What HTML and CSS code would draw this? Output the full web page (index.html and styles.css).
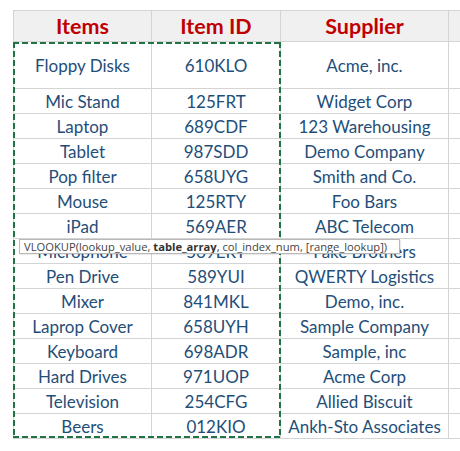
FILE: index.html
```html
<!DOCTYPE html>
<html>
<head>
<meta charset="utf-8">
<link rel="stylesheet" href="styles.css">
</head>
<body>
<div class="sheet">
  <div class="grid">
    <div class="cell head">Items</div>
    <div class="cell head">Item ID</div>
    <div class="cell head">Supplier</div>
    <div class="cell head"></div>

    <div class="cell">Floppy Disks</div><div class="cell">610KLO</div><div class="cell">Acme, inc.</div><div class="cell"></div>
    <div class="cell">Mic Stand</div><div class="cell">125FRT</div><div class="cell">Widget Corp</div><div class="cell"></div>
    <div class="cell">Laptop</div><div class="cell">689CDF</div><div class="cell">123 Warehousing</div><div class="cell"></div>
    <div class="cell">Tablet</div><div class="cell">987SDD</div><div class="cell">Demo Company</div><div class="cell"></div>
    <div class="cell">Pop filter</div><div class="cell">658UYG</div><div class="cell">Smith and Co.</div><div class="cell"></div>
    <div class="cell">Mouse</div><div class="cell">125RTY</div><div class="cell">Foo Bars</div><div class="cell"></div>
    <div class="cell">iPad</div><div class="cell">569AER</div><div class="cell">ABC Telecom</div><div class="cell"></div>
    <div class="cell">Microphone</div><div class="cell">569ERT</div><div class="cell">Fake Brothers</div><div class="cell"></div>
    <div class="cell">Pen Drive</div><div class="cell">589YUI</div><div class="cell">QWERTY Logistics</div><div class="cell"></div>
    <div class="cell">Mixer</div><div class="cell">841MKL</div><div class="cell">Demo, inc.</div><div class="cell"></div>
    <div class="cell">Laprop Cover</div><div class="cell">658UYH</div><div class="cell">Sample Company</div><div class="cell"></div>
    <div class="cell">Keyboard</div><div class="cell">698ADR</div><div class="cell">Sample, inc</div><div class="cell"></div>
    <div class="cell">Hard Drives</div><div class="cell">971UOP</div><div class="cell">Acme Corp</div><div class="cell"></div>
    <div class="cell">Television</div><div class="cell">254CFG</div><div class="cell">Allied Biscuit</div><div class="cell"></div>
    <div class="cell">Beers</div><div class="cell">012KIO</div><div class="cell">Ankh-Sto Associates</div><div class="cell"></div>
  </div>
  <div class="marquee"></div>
  <div class="tooltip">VLOOKUP(lookup_value, <b>table_array</b>, col_index_num, [range_lookup])</div>
</div>
</body>
</html>
```

FILE: styles.css
```css
html, body {
  margin: 0;
  padding: 0;
  background: #ffffff;
  overflow: hidden;
}
body {
  width: 460px;
  height: 451px;
}
.sheet {
  position: relative;
  padding: 10px 0 0 13px;
}
.grid {
  display: grid;
  grid-template-columns: 138px 129px 168px 1fr;
  grid-template-rows: 31px 47px;
  grid-auto-rows: 25px;
  border-top: 1px solid #d4d4d4;
  border-left: 1px solid #d4d4d4;
}
.cell {
  box-sizing: border-box;
  border-right: 1px solid #d4d4d4;
  border-bottom: 1px solid #d4d4d4;
  display: flex;
  align-items: center;
  justify-content: center;
  font-family: Lato, "Open Sans", sans-serif;
  font-size: 17px;
  color: #1f4e79;
  white-space: nowrap;
  overflow: hidden;
  padding-top: 1px;
}
.cell:nth-child(4n) {
  border-right: none;
}
.head {
  background: #f0f0f0;
  color: #c00000;
  font-weight: bold;
  font-size: 21.5px;
  padding-top: 0;
}
.marquee {
  position: absolute;
  left: 13px;
  top: 42px;
  width: 268px;
  height: 396px;
  background-image:
    repeating-linear-gradient(to right, #217346 0 6px, transparent 6px 9px),
    repeating-linear-gradient(to right, #217346 0 6px, transparent 6px 9px),
    repeating-linear-gradient(to bottom, #217346 0 6px, transparent 6px 9px),
    repeating-linear-gradient(to bottom, #217346 0 6px, transparent 6px 9px);
  background-size: 100% 2px, 100% 2px, 2px 100%, 2px 100%;
  background-position: 0 0, 0 100%, 0 0, 100% 0;
  background-repeat: no-repeat;
}
.tooltip {
  position: absolute;
  left: 19px;
  top: 239px;
  width: 381px;
  height: 15px;
  box-sizing: border-box;
  background: #ffffff;
  border: 1px solid #b8b8b8;
  font-family: "Open Sans", sans-serif;
  font-size: 11.2px;
  line-height: 13px;
  color: #444444;
  padding-left: 4px;
  white-space: nowrap;
  overflow: hidden;
  box-shadow: 1px 1px 1px rgba(0,0,0,0.08);
}
.tooltip b {
  font-weight: bold;
  color: #333333;
}
```
